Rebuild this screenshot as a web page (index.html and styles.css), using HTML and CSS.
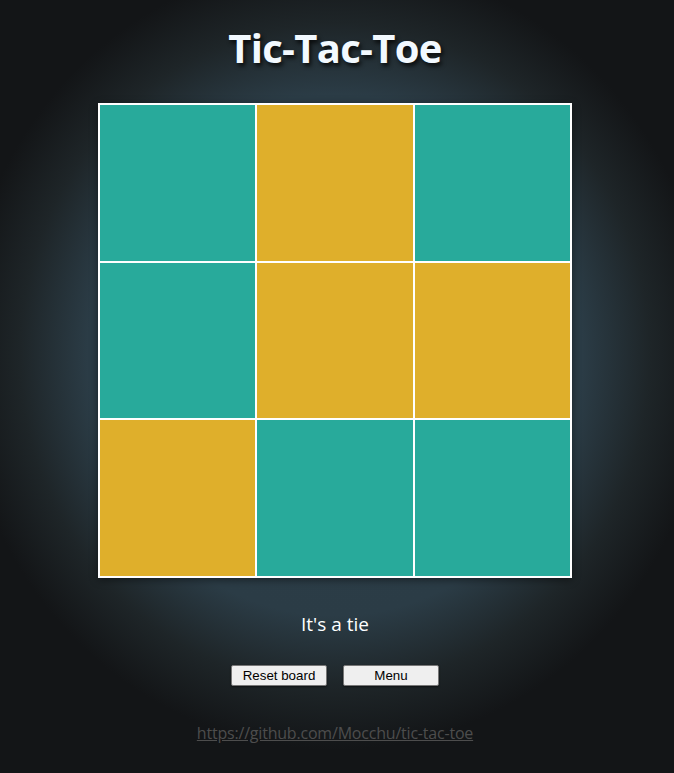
FILE: index.html
```html
<!DOCTYPE html>
<html lang="en">
<head>
<meta charset="utf-8">
<title>Tic-Tac-Toe</title>
<link rel="stylesheet" href="styles.css">
</head>
<body>
<main class="page">
  <h1 class="title">Tic-Tac-Toe</h1>
  <div class="board">
    <div class="cell cell-o"></div>
    <div class="cell cell-x"></div>
    <div class="cell cell-o"></div>
    <div class="cell cell-o"></div>
    <div class="cell cell-x"></div>
    <div class="cell cell-x"></div>
    <div class="cell cell-x"></div>
    <div class="cell cell-o"></div>
    <div class="cell cell-o"></div>
  </div>
  <p class="status">It's a tie</p>
  <div class="controls">
    <button class="btn" type="button">Reset board</button>
    <button class="btn" type="button">Menu</button>
  </div>
  <a class="repo" href="#">https://github.com/Mocchu/tic-tac-toe</a>
</main>
</body>
</html>
```

FILE: styles.css
```css
html, body {
  margin: 0;
  height: 100%;
}

body {
  background: radial-gradient(ellipse 375px 395px at 335px 355px, #2d3f49 0%, #2b3c46 66%, #1e2528 84%, #131517 100%);
  background-color: #111314;
  font-family: "Open Sans", "Noto Sans", sans-serif;
  color: #ffffff;
  overflow: hidden;
}

.page {
  width: 670px;
  display: flex;
  flex-direction: column;
  align-items: center;
}

.title {
  margin: 16px 0 0;
  height: 64px;
  font-size: 40px;
  line-height: 64px;
  font-weight: 700;
  letter-spacing: -0.7px;
  color: #f2f9ff;
  text-shadow: 2px 3px 4px rgba(0, 0, 0, 0.75);
}

.board {
  margin-top: 23px;
  width: 470px;
  height: 471px;
  padding: 2px;
  background: #ffffff;
  display: grid;
  grid-template-columns: repeat(3, 1fr);
  grid-template-rows: repeat(3, 1fr);
  gap: 2px;
  box-shadow: 0 2px 8px rgba(0, 0, 0, 0.45);
}

.cell-o {
  background: #28aa9b;
}

.cell-x {
  background: #dfaf2b;
}

.status {
  margin: 32px 0 0;
  font-size: 19px;
  line-height: 28px;
  color: #ffffff;
}

.controls {
  margin-top: 27px;
  display: flex;
  gap: 16px;
}

.btn {
  width: 96px;
  height: 21px;
  padding: 0;
  font-family: Arial, "Liberation Sans", sans-serif;
  font-size: 13.33px;
  color: #000000;
  background: #efefef;
  border: 1px solid #767676;
  border-radius: 2px;
  box-shadow: 0 1px 2px rgba(0, 0, 0, 0.5);
}

.repo {
  margin-top: 35px;
  font-size: 16px;
  line-height: 24px;
  color: #4d4d4d;
  text-decoration: underline;
  letter-spacing: -0.2px;
}
```
